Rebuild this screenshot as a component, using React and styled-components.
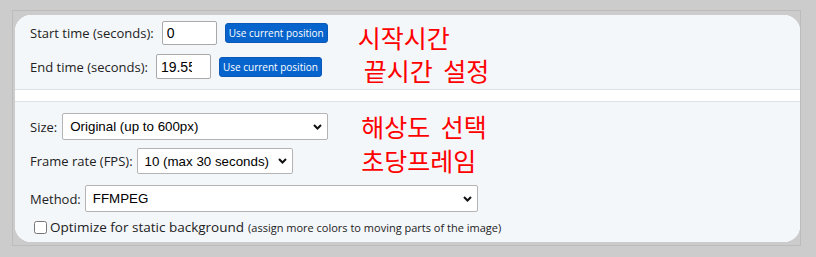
import React from 'react';
import styled, { createGlobalStyle } from 'styled-components';

const GlobalStyle = createGlobalStyle`
  body {
    margin: 0;
    background: #cccccc;
    font-family: "Open Sans", "Noto Sans", sans-serif;
  }
`;

const Frame = styled.div`
  box-sizing: border-box;
  width: 789px;
  height: 236px;
  margin: 10px 0 0 12px;
  padding: 4px 0 3px 2px;
  border: 1px solid #bcbcbc;
`;

const Panel = styled.div`
  height: 100%;
  border-radius: 16px;
  overflow: hidden;
  background: #ffffff;
  display: flex;
  flex-direction: column;
`;

const Section = styled.div`
  background: #f4f7fa;
  padding: ${p => p.pad};
  border-top: ${p => (p.topLine ? '1px solid #dde2e7' : 'none')};
  border-bottom: ${p => (p.bottomLine ? '1px solid #dde2e7' : 'none')};
  flex: ${p => (p.grow ? 1 : 'none')};
  height: ${p => p.h || 'auto'};
  box-sizing: border-box;
`;

const Spacer = styled.div`
  height: 11px;
  flex: none;
`;

const Split = styled.div`
  display: flex;
  align-items: flex-start;
`;

const Rows = styled.div`
  display: flex;
  flex-direction: column;
  gap: ${p => p.gap}px;
`;

const Row = styled.div`
  display: flex;
  align-items: center;
  height: ${p => p.h}px;
  margin-top: ${p => p.mt || 0}px;
`;

const Label = styled.label`
  font-size: 13px;
  color: #222;
  margin-right: ${p => p.gap}px;
  white-space: nowrap;
`;

const TimeInput = styled.input`
  box-sizing: border-box;
  width: 55px;
  height: ${p => p.h}px;
  border: 1px solid #a9a9a9;
  border-radius: 2px;
  padding: 0 18px 0 4px;
  font: 14px "Liberation Sans", Arial, sans-serif;
  color: #000;
  background: #fff;
  &::-webkit-inner-spin-button {
    display: none;
  }
`;

const PosButton = styled.button`
  box-sizing: border-box;
  height: 20px;
  width: 103px;
  margin-left: 8px;
  padding: 0;
  border: 1px solid #0a58b8;
  border-radius: 3px;
  background: #0764cc;
  color: #fff;
  font: 10px "Open Sans", "Noto Sans", sans-serif;
  white-space: nowrap;
`;

const Notes = styled.div`
  margin-left: ${p => p.gap}px;
  margin-top: ${p => p.mt}px;
  display: flex;
  flex-direction: column;
`;

const Note = styled.div`
  font: 25px "Noto Sans CJK KR", sans-serif;
  color: #ff0000;
  line-height: ${p => p.lh}px;
  padding-left: ${p => p.indent || 0}px;
  word-spacing: 5px;
  white-space: nowrap;
`;

const SelectWrap = styled.div`
  position: relative;
  width: ${p => p.w}px;
  height: ${p => p.h}px;
`;

const Select = styled.select`
  appearance: none;
  box-sizing: border-box;
  width: 100%;
  height: 100%;
  border: 1px solid #b4b4b4;
  border-radius: 2px;
  background: #fff;
  padding: 0 20px 0 7px;
  font: 13.33px "Liberation Sans", Arial, sans-serif;
  color: #000;
`;

const Chevron = styled.svg`
  position: absolute;
  right: 6px;
  top: 50%;
  margin-top: -3px;
  pointer-events: none;
`;

const CheckRow = styled.label`
  display: flex;
  align-items: center;
  margin-top: 5px;
  height: 20px;
  color: #222;
  white-space: nowrap;
`;

const Check = styled.input`
  width: 13px;
  height: 13px;
  margin: 0 3px 0 4px;
`;

const BigText = styled.span`
  font-size: 13.5px;
`;

const SmallText = styled.span`
  font-size: 11px;
  margin-left: 4px;
`;

const Dropdown = ({ w, h, value }) => (
  <SelectWrap w={w} h={h}>
    <Select defaultValue={value}>
      <option>{value}</option>
    </Select>
    <Chevron width="9" height="6" viewBox="0 0 9 6">
      <path d="M1 1 L4.5 4.5 L8 1" fill="none" stroke="#111" strokeWidth="2" />
    </Chevron>
  </SelectWrap>
);

export default function App() {
  return (
    <>
      <GlobalStyle />
      <Frame>
        <Panel>
          <Section pad="6px 0 0 15px" h="75px" bottomLine>
            <Split>
              <Rows gap={9}>
                <Row h={24}>
                  <Label gap={8}>Start time (seconds):</Label>
                  <TimeInput type="number" h={24} defaultValue="0" />
                  <PosButton>Use current position</PosButton>
                </Row>
                <Row h={25}>
                  <Label gap={8}>End time (seconds):</Label>
                  <TimeInput type="number" h={25} defaultValue="19.55" />
                  <PosButton>Use current position</PosButton>
                </Row>
              </Rows>
              <Notes gap={30} mt={0}>
                <Note lh={33}>시작시간</Note>
                <Note lh={33} indent={6}>끝시간 설정</Note>
              </Notes>
            </Split>
          </Section>
          <Spacer />
          <Section pad="11px 15px 0 15px" topLine grow>
            <Split>
              <Rows gap={8}>
                <Row h={27}>
                  <Label gap={5}>Size:</Label>
                  <Dropdown w={266} h={27} value="Original (up to 600px)" />
                </Row>
                <Row h={26}>
                  <Label gap={4}>Frame rate (FPS):</Label>
                  <Dropdown w={156} h={26} value="10 (max 30 seconds)" />
                </Row>
              </Rows>
              <Notes gap={33} mt={-4}>
                <Note lh={34}>해상도 선택</Note>
                <Note lh={34}>초당프레임</Note>
              </Notes>
            </Split>
            <Row h={27} mt={8}>
              <Label gap={4}>Method:</Label>
              <Dropdown w={393} h={27} value="FFMPEG" />
            </Row>
            <CheckRow>
              <Check type="checkbox" />
              <BigText>Optimize for static background</BigText>
              <SmallText>(assign more colors to moving parts of the image)</SmallText>
            </CheckRow>
          </Section>
        </Panel>
      </Frame>
    </>
  );
}
